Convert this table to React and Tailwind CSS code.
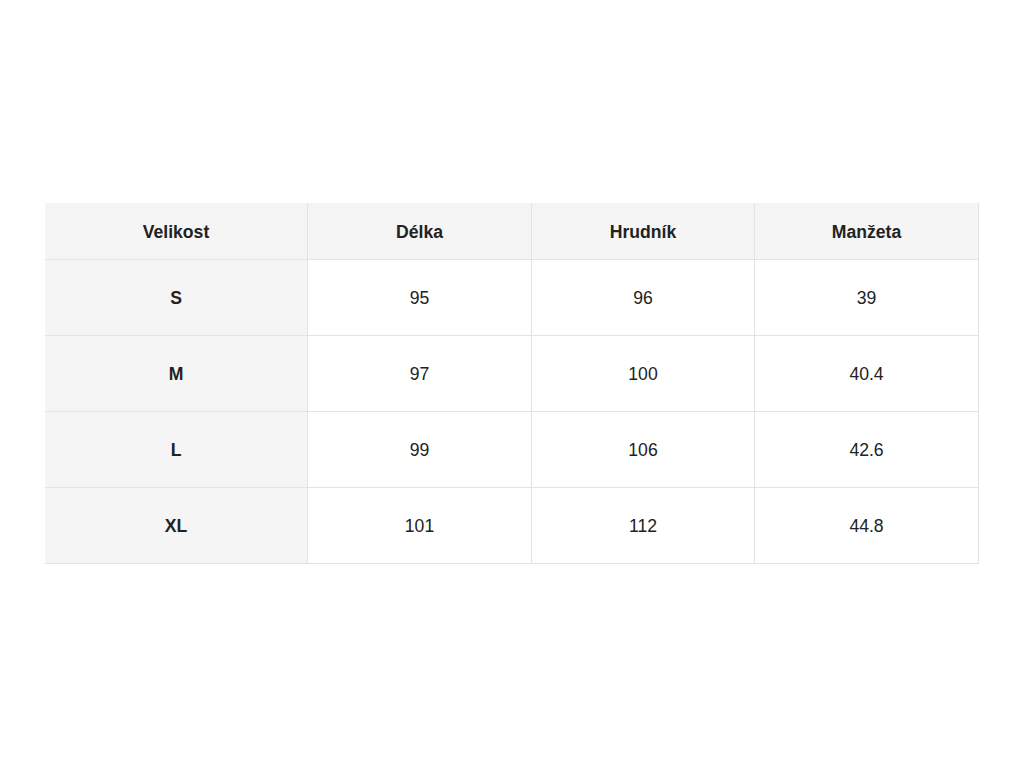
const headers = ['Velikost', 'Délka', 'Hrudník', 'Manžeta'];
const rows = [
  ['S', '95', '96', '39'],
  ['M', '97', '100', '40.4'],
  ['L', '99', '106', '42.6'],
  ['XL', '101', '112', '44.8'],
];

export default function App() {
  return (
    <div className="min-h-screen bg-white flex items-center justify-center pb-[1px] font-['Liberation_Sans',Arial,sans-serif] text-[#222]">
      <div className="grid grid-cols-[263px_224px_223px_224px] text-[17.6px]">
        {headers.map((h) => (
          <div key={h} className="h-[57px] pt-[3px] flex items-center justify-center bg-[#f5f5f5] font-bold border-r border-b border-[#e3e3e3]">
            {h}
          </div>
        ))}
        {rows.map((r) =>
          r.map((c, i) => (
            <div
              key={r[0] + i}
              className={`h-[76px] pt-[1px] flex items-center justify-center border-r border-b border-[#e3e3e3] ${i === 0 ? 'bg-[#f5f5f5] font-bold' : 'bg-white'}`}
            >
              {c}
            </div>
          ))
        )}
      </div>
    </div>
  );
}
